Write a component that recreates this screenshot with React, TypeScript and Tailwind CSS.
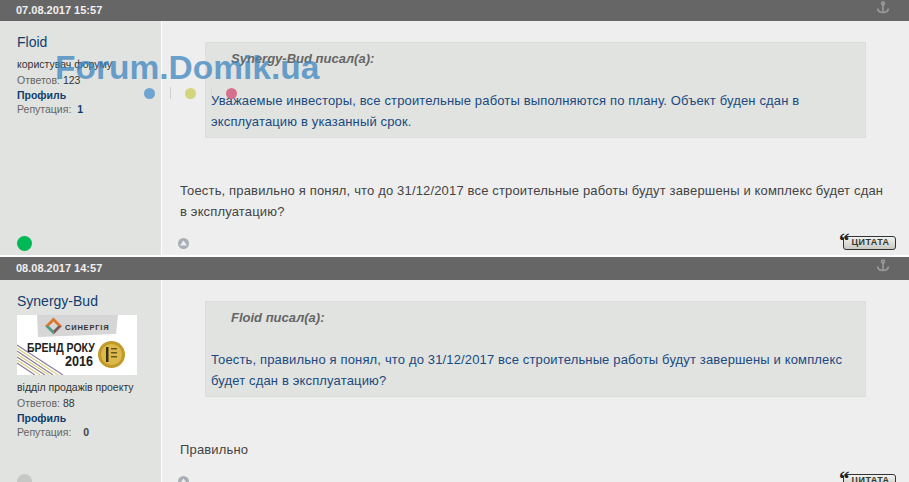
const font = "font-['Liberation_Sans',Arial,sans-serif]";

function Anchor() {
  return (
    <svg width="14" height="14" viewBox="0 0 14 14" fill="none" stroke="#9a9a9a" strokeWidth="1.6">
      <circle cx="7" cy="2.5" r="1.4" />
      <path d="M7 4v7.5M1.5 7.5c.5 2.6 2.8 4 5.5 4s5-1.4 5.5-4" />
    </svg>
  );
}

function UpButton() {
  return (
    <span className="ml-[-2px] flex h-[11px] w-[11px] items-center justify-center rounded-full bg-[#a9afb5]">
      <svg width="7" height="6" viewBox="0 0 7 6">
        <path d="M3.5 0.5 7 5.5H0z" fill="#eeeeee" />
      </svg>
    </span>
  );
}

function QuoteButton() {
  return (
    <span className="relative flex h-[14px] w-[53px] items-center justify-center rounded-[3px] border border-[#333] bg-gradient-to-b from-[#f2f2f0] to-[#c9c9c2] pl-[2px] text-[9px] font-bold tracking-[0.4px] text-[#33382c]">
      ЦИТАТА
      <span className="absolute left-[-5px] top-[-6px] font-['Liberation_Serif',serif] text-[21px] leading-[21px] font-bold text-[#222]">“</span>
    </span>
  );
}

function BrandBanner() {
  return (
    <div className="relative h-[60px] w-[120px] overflow-hidden bg-white">
      <svg className="absolute left-0 top-0" width="120" height="60" viewBox="0 0 120 60">
        <path d="M20 0h81l-2 19-78 3z" fill="#d6d6d6" />
        <path d="M28 11l8.500-8.500 8.500 8.500-4 0-4.500-4.500-4.500 4.500z" fill="#d9772f" />
        <path d="M28 11l8.500 8.500 0-4-4.500-4.500z" fill="#4f9a84" />
        <path d="M45 11l-8.500 8.500 0-4 4.500-4.500z" fill="#7a5a58" />
        <path d="M0 30l46 30M0 36l36 24M0 42l28 18M0 48l18 12" stroke="#8a7a9a" strokeWidth="1.1" />
        <path d="M0 33l41 27M0 39l32 21M0 45l23 15" stroke="#d8cf7a" strokeWidth="1.1" />
        <circle cx="94.500" cy="39.500" r="13.500" fill="#c29a2a" />
        <circle cx="94.500" cy="39.500" r="10.500" fill="#dcb94a" />
        <path d="M89 32h2.500v15H89z" fill="#3a3018" />
        <path d="M94 33h6v1.500h-6zM94 37h6v1.500h-6zM94 41h6v1.500h-6z" fill="#6a5620" />
      </svg>
      <span className="absolute left-[48px] top-[9px] text-[7.5px] leading-[7px] font-bold tracking-[0.8px] text-[#333]">СИНЕРГІЯ</span>
      <span className="absolute left-[10px] top-[27px] origin-left scale-x-[0.84] whitespace-nowrap text-[12.5px] leading-[13px] font-bold text-[#222]">БРЕНД РОКУ</span>
      <span className="absolute left-[48px] top-[39px] origin-left scale-x-[0.9] text-[14px] leading-[15px] font-bold text-[#222]">2016</span>
    </div>
  );
}

interface PostProps {
  date: string;
  author: string;
  role: string;
  answers: string;
  reputation: string;
  repClass: string;
  online: boolean;
  quoteAuthor: string;
  quote: string;
  message: string;
  hasBanner?: boolean;
  headerClass: string;
  heightClass: string;
}

function Post(props: PostProps) {
  return (
    <div className="flex flex-col">
      <div className={`flex items-center justify-between bg-[#666666] pl-[16px] pr-[19px] ${props.headerClass}`}>
        <span className="text-[11px] font-bold text-[#f0f0f0]">{props.date}</span>
        <span className="mt-[-6px]"><Anchor /></span>
      </div>
      <div className={`flex ${props.heightClass}`}>
        <div className="flex w-[162px] shrink-0 flex-col justify-between border-r-[1px] border-white bg-[#e1e3e0] pb-[4px] pl-[17px]">
          <div className="pt-[12px]">
            <div className="text-[14px] leading-[18px] text-[#0f3d6e]">{props.author}</div>
            {props.hasBanner && <div className="mt-[5px] mb-[-1px]"><BrandBanner /></div>}
            <div className="mt-[5px] text-[10.5px] leading-[16px] text-[#333]">{props.role}</div>
            <div className="text-[10.5px] leading-[16px] text-[#666]">
              Ответов: <span className="text-[#333]">{props.answers}</span>
            </div>
            <div className="text-[10.5px] leading-[14px] font-bold text-[#0f3d6e]">Профиль</div>
            <div className="flex text-[10.5px] leading-[14px] text-[#666]">
              Репутация:
              <span className={`font-bold ${props.repClass}`}>{props.reputation}</span>
            </div>
          </div>
          <span className={`h-[15px] w-[15px] rounded-full ${props.online ? "bg-[#00b956]" : "bg-[#c6c8c6]"}`} />
        </div>
        <div className="flex min-w-0 flex-1 flex-col justify-between bg-[#eeeeee] pl-[18px] pr-[13px]">
          <div>
            <div className="mt-[21px] mr-[30px] ml-[25px] h-[96px] border border-[#dcdedb] bg-[#e1e3e0] pl-[5px] pr-[10px]">
              <div className="pl-[20px] pt-[7px] text-[13px] leading-[17px] font-bold italic text-[#666]">
                {props.quoteAuthor} писал(а):
              </div>
              <div className="mt-[23px] text-[13px] leading-[21px] tracking-[0.15px] text-[#1a4a80]">{props.quote}</div>
            </div>
            <div className="mt-[42px] mr-[12px] text-[13px] leading-[21px] tracking-[0.16px] text-[#444]">{props.message}</div>
          </div>
          <div className="flex items-center justify-between pb-[5px]">
            <UpButton />
            <QuoteButton />
          </div>
        </div>
      </div>
    </div>
  );
}

export default function App() {
  return (
    <div className={`relative flex h-[482px] w-[909px] flex-col gap-[2px] overflow-hidden bg-white ${font}`}>
      <Post
        date="07.08.2017 15:57"
        author="Floid"
        role="користувач форуму"
        answers="123"
        reputation="1"
        repClass="ml-[6px] text-[#0f3d6e]"
        online
        quoteAuthor="Synergy-Bud"
        quote="Уважаемые инвесторы, все строительные работы выполняются по плану. Объект буден сдан в эксплуатацию в указанный срок."
        message="Тоесть, правильно я понял, что до 31/12/2017 все строительные работы будут завершены и комплекс будет сдан в эксплуатацию?"
        headerClass="h-[21px]"
        heightClass="h-[234px]"
      />
      <Post
        date="08.08.2017 14:57"
        author="Synergy-Bud"
        role="відділ продажів проекту"
        answers="88"
        reputation="0"
        repClass="ml-[12px] text-[#444]"
        online={false}
        quoteAuthor="Floid"
        quote="Тоесть, правильно я понял, что до 31/12/2017 все строительные работы будут завершены и комплекс будет сдан в эксплуатацию?"
        message="Правильно"
        hasBanner
        headerClass="h-[23px]"
        heightClass="h-[213px]"
      />
      <div className="absolute left-[55px] top-[49px] text-[33.5px] leading-[38px] font-bold text-[#3d85c0]/75">Forum.Domik.ua</div>
      <div className="absolute left-[144px] top-[87px] flex items-center">
        <span className="h-[11px] w-[11px] rounded-full bg-[#6ea3d2]" />
        <span className="ml-[15px] h-[12px] w-px bg-[#cfcfcf]" />
        <span className="ml-[14px] h-[11px] w-[11px] rounded-full bg-[#d2d67e]" />
        <span className="ml-[15px] h-[12px] w-px bg-[#d8d8d8]" />
        <span className="ml-[14px] h-[11px] w-[11px] rounded-full bg-[#d6708f]" />
      </div>
    </div>
  );
}
